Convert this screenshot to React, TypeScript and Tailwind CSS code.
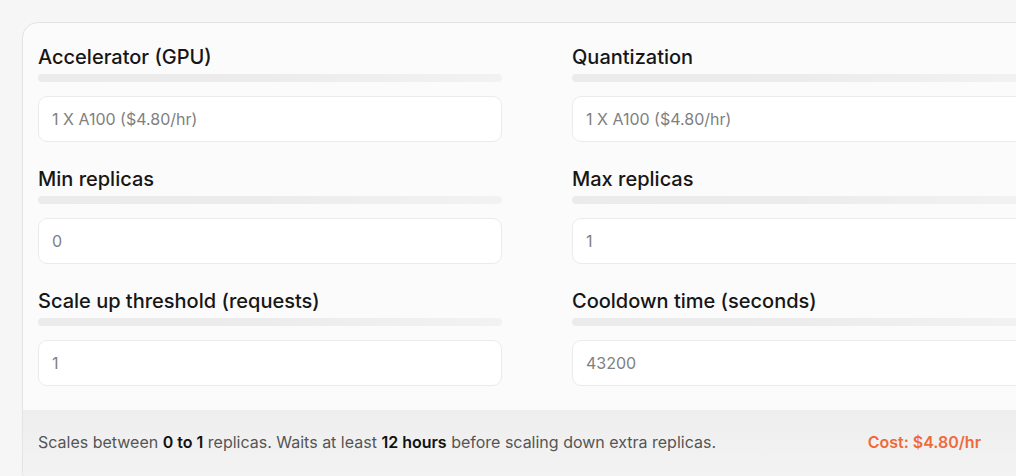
import React from 'react';

type Field = { label: string; value: string };

const FIELDS: Field[] = [
  { label: 'Accelerator (GPU)', value: '1 X A100 ($4.80/hr)' },
  { label: 'Quantization', value: '1 X A100 ($4.80/hr)' },
  { label: 'Min replicas', value: '0' },
  { label: 'Max replicas', value: '1' },
  { label: 'Scale up threshold (requests)', value: '1' },
  { label: 'Cooldown time (seconds)', value: '43200' },
];

const FieldBlock: React.FC<{ field: Field }> = ({ field }) => (
  <div className="flex flex-col">
    <label className="text-[20px] leading-6 font-medium text-[#161616]">{field.label}</label>
    <div className="mt-[5px] h-2 rounded-full bg-gradient-to-r from-[#ebebeb] via-[#ececec] to-[#f2f2f2]" />
    <input
      type="text"
      placeholder={field.value}
      className="mt-[14px] h-[46px] w-full rounded-[9px] border border-[#ebebeb] bg-white px-[13px] text-[16px] text-[#222] placeholder:text-[#808080] outline-none"
    />
  </div>
);

export default function App() {
  return (
    <div
      className="min-h-screen w-full overflow-hidden bg-[#f6f6f6] pt-[22px] pl-[22px]"
      style={{ fontFamily: 'Inter, "Noto Sans", sans-serif' }}
    >
      <div className="w-[1030px] rounded-2xl border border-[#e4e4e4] bg-[#fbfbfb] overflow-hidden shadow-[0_1px_2px_rgba(0,0,0,0.03)]">
        {/* Form */}
        <div className="grid grid-cols-2 gap-x-[70px] gap-y-[25px] pl-[15px] pr-[15px] pt-[22px] pb-[24px]">
          {FIELDS.map(f => (
            <FieldBlock key={f.label} field={f} />
          ))}
        </div>

        {/* Summary */}
        <div className="flex items-center justify-between bg-gradient-to-b from-[#eeeeee] to-[#f4f4f4] pl-[15px] pr-[70px] pt-[20px] pb-[32px] text-[16px] leading-6">
          <p className="text-[#555]">
            Scales between <span className="font-semibold text-[#111]">0 to 1</span> replicas. Waits at least{' '}
            <span className="font-semibold text-[#111]">12 hours</span> before scaling down extra replicas.
          </p>
          <span className="font-semibold text-[#ef6a3b]">Cost: $4.80/hr</span>
        </div>
      </div>
    </div>
  );
}
